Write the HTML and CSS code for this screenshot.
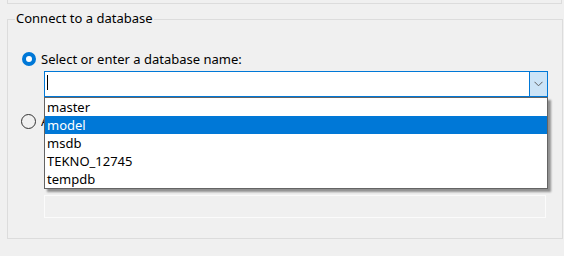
FILE: index.html
```html
<!DOCTYPE html>
<html lang="en">
<head>
  <meta charset="UTF-8" />
  <title>Connect to a database</title>
  <link rel="stylesheet" href="styles.css">
</head>
<body>

  <!-- panel above the group -->
  <div class="top-panel"></div>

  <!-- Connect group -->
  <div class="group">
    <span class="group-title">Connect to a database</span>

    <div class="option">
      <span class="radio checked"></span>
      <span class="option-label">Select or enter a database name:</span>
    </div>

    <div class="combo">
      <div class="combo-input"><span class="caret"></span></div>
      <div class="combo-btn">
        <svg width="9" height="6" viewBox="0 0 9 6"><path d="M0.5 0.8 L4.5 4.8 L8.5 0.8" fill="none" stroke="#5f5f5f" stroke-width="1"/></svg>
      </div>

      <ul class="combo-list">
        <li>master</li>
        <li class="selected">model</li>
        <li>msdb</li>
        <li>TEKNO_12745</li>
        <li>tempdb</li>
      </ul>
    </div>

    <div class="option option-second">
      <span class="radio"></span>
      <span class="option-label hidden-label">Attach a database file:</span>
    </div>

    <div class="field-disabled"></div>
  </div>

</body>
</html>
```

FILE: styles.css
```css
* {
  box-sizing: border-box;
  margin: 0;
  padding: 0;
}

body {
  background: #f0f0f0;
  font-family: 'Noto Sans', 'Liberation Sans', sans-serif;
  font-size: 13px;
  color: #000;
  width: 564px;
  height: 256px;
  overflow: hidden;
}

.top-panel {
  margin-left: 7px;
  width: 555px;
  height: 4px;
  border: 1px solid #dcdcdc;
  border-top: none;
}

.group {
  position: relative;
  margin: 15px 0 0 7px;
  width: 556px;
  height: 220px;
  border: 1px solid #dcdcdc;
  padding: 32px 0 0 14px;
}

.group-title {
  position: absolute;
  top: -10px;
  left: 7px;
  padding: 0 1px;
  background: #f0f0f0;
  line-height: 17px;
}

.option {
  display: flex;
  align-items: center;
  gap: 5px;
  height: 14px;
}

.option-label {
  line-height: 14px;
  white-space: nowrap;
}

/* label of the second option sits behind the open list */
.hidden-label {
  width: 4px;
  overflow: hidden;
}

.radio {
  width: 14px;
  height: 14px;
  border-radius: 50%;
  border: 1px solid #333;
  background: transparent;
  flex: none;
}

.radio.checked {
  border: 4px solid #0078d7;
  background: #fff;
}

.combo {
  position: relative;
  display: flex;
  margin: 5px 0 0 22px;
  width: 504px;
  height: 26px;
  border: 1px solid #0078d7;
  background: #fff;
}

.combo-input {
  flex: 1;
  padding: 3px 0 0 2px;
}

.caret {
  display: block;
  width: 1px;
  height: 15px;
  background: #000;
}

.combo-btn {
  width: 19px;
  margin: -1px -1px -1px 0;
  border: 1px solid #0078d7;
  background: #cce4f7;
  display: flex;
  align-items: center;
  justify-content: center;
}

.combo-list {
  position: absolute;
  top: 25px;
  left: -1px;
  width: 504px;
  height: 92px;
  list-style: none;
  background: #fff;
  border: 1px solid #646464;
  box-shadow: 3px 3px 2px rgba(0, 0, 0, 0.4);
  z-index: 2;
}

.combo-list li {
  height: 18px;
  line-height: 18px;
  padding-left: 2px;
}

.combo-list li.selected {
  background: #0078d7;
  color: #fff;
}

.option-second {
  margin-top: 17px;
  margin-left: -1px;
}

.option-second .radio {
  width: 15px;
  height: 15px;
}

.field-disabled {
  margin: 67px 0 0 22px;
  width: 502px;
  height: 23px;
  border: 1px solid #fbfbfb;
  background: #f0f0f0;
}
```
